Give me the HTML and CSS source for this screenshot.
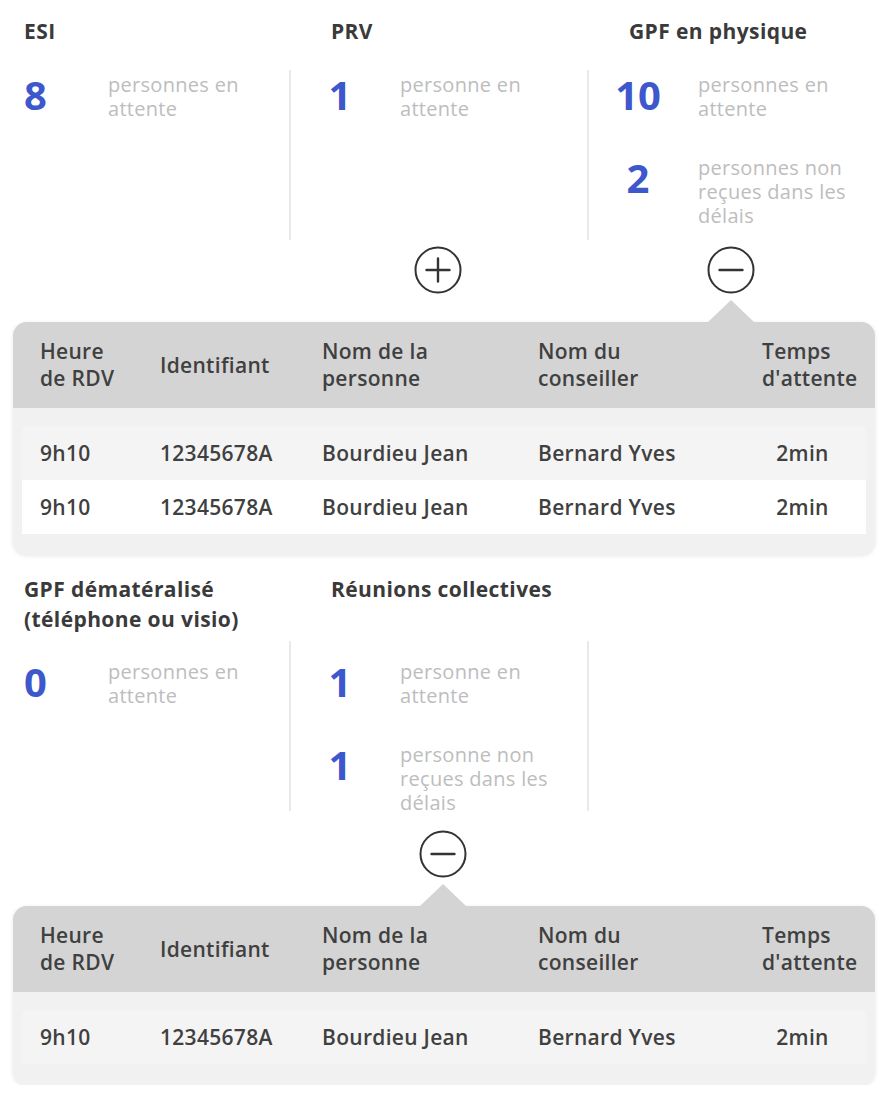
FILE: index.html
```html
<!DOCTYPE html>
<html lang="fr">
<head>
<meta charset="utf-8">
<title>Files d'attente</title>
<link rel="stylesheet" href="styles.css">
</head>
<body>
<main class="page">

  <section class="group">
    <div class="cols">
      <h2 class="title">ESI</h2>
      <h2 class="title title--inset">PRV</h2>
      <h2 class="title title--inset">GPF en physique</h2>

      <div class="stats stats--lead">
        <div class="stat"><span class="num">8</span><span class="desc">personnes en attente</span></div>
      </div>
      <div class="stats stats--divided">
        <div class="stat"><span class="num">1</span><span class="desc">personne en attente</span></div>
      </div>
      <div class="stats stats--divided">
        <div class="stat"><span class="num">10</span><span class="desc">personnes en attente</span></div>
        <div class="stat"><span class="num">2</span><span class="desc">personnes non reçues dans les délais</span></div>
      </div>

      <div class="toggle-cell"></div>
      <div class="toggle-cell">
        <button class="toggle" type="button" aria-label="Déplier">
          <svg width="48" height="48" viewBox="0 0 48 48"><circle cx="24" cy="24" r="22.5" fill="none" stroke="#333" stroke-width="2"/><path d="M12.5 24h23M24 12.5v23" stroke="#333" stroke-width="2.4" stroke-linecap="round"/></svg>
        </button>
      </div>
      <div class="toggle-cell">
        <button class="toggle" type="button" aria-label="Replier">
          <svg width="48" height="48" viewBox="0 0 48 48"><circle cx="24" cy="24" r="22.5" fill="none" stroke="#333" stroke-width="2"/><path d="M12.5 24h23" stroke="#333" stroke-width="2.4" stroke-linecap="round"/></svg>
        </button>
        <span class="caret"></span>
      </div>
    </div>

    <div class="panel">
      <div class="thead">
        <div>Heure<br>de RDV</div>
        <div>Identifiant</div>
        <div>Nom de la<br>personne</div>
        <div>Nom du<br>conseiller</div>
        <div>Temps<br>d'attente</div>
      </div>
      <div class="tbody">
        <div class="tr">
          <div>9h10</div><div>12345678A</div><div>Bourdieu Jean</div><div>Bernard Yves</div><div class="td-center">2min</div>
        </div>
        <div class="tr">
          <div>9h10</div><div>12345678A</div><div>Bourdieu Jean</div><div>Bernard Yves</div><div class="td-center">2min</div>
        </div>
      </div>
    </div>
  </section>

  <section class="group group--second">
    <div class="cols">
      <h2 class="title">GPF dématéralisé<br>(téléphone ou visio)</h2>
      <h2 class="title title--inset">Réunions collectives</h2>
      <div class="title title--inset"></div>

      <div class="stats stats--lead">
        <div class="stat"><span class="num">0</span><span class="desc">personnes en attente</span></div>
      </div>
      <div class="stats stats--divided">
        <div class="stat"><span class="num">1</span><span class="desc">personne en attente</span></div>
        <div class="stat"><span class="num">1</span><span class="desc">personne non reçues dans les délais</span></div>
      </div>
      <div class="stats stats--divided"></div>

      <div class="toggle-cell"></div>
      <div class="toggle-cell toggle-cell--nudge">
        <button class="toggle" type="button" aria-label="Replier">
          <svg width="48" height="48" viewBox="0 0 48 48"><circle cx="24" cy="24" r="22.5" fill="none" stroke="#333" stroke-width="2"/><path d="M12.5 24h23" stroke="#333" stroke-width="2.4" stroke-linecap="round"/></svg>
        </button>
        <span class="caret"></span>
      </div>
      <div class="toggle-cell"></div>
    </div>

    <div class="panel">
      <div class="thead">
        <div>Heure<br>de RDV</div>
        <div>Identifiant</div>
        <div>Nom de la<br>personne</div>
        <div>Nom du<br>conseiller</div>
        <div>Temps<br>d'attente</div>
      </div>
      <div class="tbody">
        <div class="tr">
          <div>9h10</div><div>12345678A</div><div>Bourdieu Jean</div><div>Bernard Yves</div><div class="td-center">2min</div>
        </div>
      </div>
    </div>
  </section>

</main>
</body>
</html>
```

FILE: styles.css
```css
* { box-sizing: border-box; }

html, body {
  margin: 0;
  background: #ffffff;
}

body {
  font-family: "Open Sans", "Noto Sans", sans-serif;
  color: #3c3c3c;
}

.page {
  width: 892px;
  padding: 16px 17px 0 13px;
}

.group--second {
  margin-top: 19px;
}

.cols {
  display: grid;
  grid-template-columns: 265px 298px 1fr;
  margin-left: 11px;
}

.title {
  margin: 0;
  min-height: 54px;
  padding-bottom: 7px;
  font-size: 21px;
  line-height: 30px;
  font-weight: 700;
  letter-spacing: 0.4px;
  color: #3a3a3a;
}

.title--inset {
  padding-left: 42px;
}

.stats {
  height: 170px;
  padding-top: 3px;
  display: flex;
  flex-direction: column;
  gap: 35px;
}

.group--second .stats {
  padding-top: 19px;
}

.stats--divided {
  border-left: 2px solid #e9e9e9;
  padding-left: 14px;
}

.stat {
  display: grid;
  grid-template-columns: 70px 1fr;
  column-gap: 25px;
  align-items: start;
}

.stats--lead .stat {
  grid-template-columns: 84px 1fr;
  column-gap: 0;
}

.num {
  margin-top: 2px;
  font-size: 40px;
  line-height: 40px;
  font-weight: 700;
  color: #3d57cc;
  text-align: center;
}

.stats--lead .num {
  text-align: left;
}

.desc {
  max-width: 165px;
  font-size: 20px;
  line-height: 24px;
  letter-spacing: 0.3px;
  color: #bdbdbd;
}

.toggle-cell {
  display: flex;
  flex-direction: column;
  align-items: center;
}

.toggle-cell--nudge {
  padding-left: 10px;
}

.toggle {
  margin-top: 6px;
  padding: 0;
  border: 0;
  background: none;
  width: 48px;
  height: 48px;
  display: block;
  cursor: pointer;
}

.group--second .toggle {
  margin-top: 19px;
}

.toggle svg {
  display: block;
}

.caret {
  margin-top: 6px;
  width: 0;
  height: 0;
  border-left: 23px solid transparent;
  border-right: 23px solid transparent;
  border-bottom: 22px solid #d4d4d4;
}

.panel {
  width: 862px;
  background: #f1f1f1;
  border-radius: 14px;
  box-shadow: 0 1px 4px rgba(0, 0, 0, 0.10);
  overflow: hidden;
}

.thead,
.tr {
  display: grid;
  grid-template-columns: 120px 162px 216px 224px 1fr;
  align-items: center;
  font-weight: 600;
  font-size: 21px;
  letter-spacing: 0.3px;
  color: #404040;
}

.thead {
  min-height: 86px;
  padding: 0 12px 0 27px;
  background: #d4d4d4;
  line-height: 27px;
}

.tbody {
  padding: 18px 9px 21px;
}

.tr {
  height: 54px;
  padding: 0 9px 0 18px;
  background: #f4f4f4;
}

.tr:nth-child(even) {
  background: #ffffff;
}

.td-center {
  text-align: center;
  padding-right: 14px;
}
```
